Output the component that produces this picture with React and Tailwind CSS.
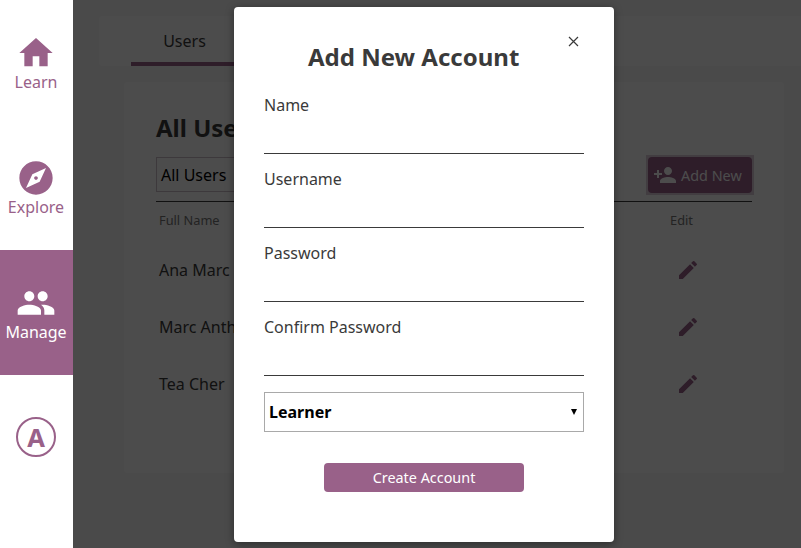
import React from "react";
import { MdHome, MdExplore, MdPeople, MdPersonAdd, MdEdit } from "react-icons/md";

const users = ["Ana Marc", "Marc Anthony", "Tea Cher"];
const fields = ["Name", "Username", "Password", "Confirm Password"];

function NavItem({ icon: Icon, label, active }) {
  return (
    <a
      className={
        active
          ? "flex h-[125px] w-full flex-col items-center bg-[#996189] pt-[33px] pr-px text-white"
          : "flex h-[125px] w-full flex-col items-center pt-[33px] pr-px text-[#996189]"
      }
    >
      <Icon className="size-10 shrink-0" />
      <span className="-mt-[2px] text-base leading-[22px]">{label}</span>
    </a>
  );
}

function Sidebar() {
  return (
    <nav className="flex h-full w-[73px] shrink-0 flex-col bg-white">
      <NavItem icon={MdHome} label="Learn" />
      <NavItem icon={MdExplore} label="Explore" />
      <NavItem icon={MdPeople} label="Manage" active />
      <div className="mt-[42px] ml-4 flex size-10 items-center justify-center rounded-full border-2 border-[#996189] pt-0.5 text-[25.6px] leading-none font-bold text-[#996189]">
        A
      </div>
    </nav>
  );
}

function Page() {
  return (
    <main className="h-full flex-1 overflow-hidden bg-[#f8f8f8] pt-4 pl-[26px]">
      <div className="flex h-[50px] rounded-l bg-white pl-8">
        <div className="h-full w-[107px] border-b-4 border-[#996189] text-center leading-[50px]">
          Users
        </div>
      </div>
      <section className="mt-4 ml-[25px] h-[391px] w-[660px] rounded bg-white px-8 pt-[29px]">
        <h1 className="text-2xl leading-[33px] font-bold">All Users</h1>
        <div className="mt-[11px] flex items-start justify-between">
          <div className="mt-0.5 h-[35px] w-[160px] border border-[#cdc0ca] pl-1 leading-[34px] text-black">
            All Users
          </div>
          <div className="-mr-0.5 bg-[#dccddb] p-0.5">
            <button className="flex h-9 w-[104px] items-center rounded bg-[#996189] pl-[5px] text-[14.4px] text-white">
              <MdPersonAdd className="size-6 shrink-0" />
              <span className="ml-1 pt-0.5 whitespace-nowrap">Add New</span>
            </button>
          </div>
        </div>
        <div className="mt-1.5 flex h-[38px] items-center justify-between border-t border-[#3a3a3a] pr-[59px] pl-[3px] text-[12.8px] text-[#757575]">
          <span>Full Name</span>
          <span>Edit</span>
        </div>
        {users.map((name) => (
          <div key={name} className="flex h-[57px] items-center justify-between pt-[5px] pr-[52px] pl-[3px]">
            <span>{name}</span>
            <MdEdit className="size-6 text-[#996189]" />
          </div>
        ))}
      </section>
    </main>
  );
}

function AccountDialog() {
  return (
    <div className="flex h-[535px] w-[380px] flex-col rounded bg-white px-[30px] pt-[23px] shadow-[0_2px_8px_rgba(0,0,0,0.4)]">
      <header className="flex h-[63px] items-start pl-11">
        <h2 className="mt-[10px] text-2xl leading-[33px] font-bold whitespace-nowrap">Add New Account</h2>
        <button aria-label="Close" className="mr-[5px] ml-auto flex h-[23px] items-center">
          <svg viewBox="0 0 11 11" className="size-[11px]" stroke="#3a3a3a" strokeWidth="1.2">
            <path d="M1 1L10 10M10 1L1 10" />
          </svg>
        </button>
      </header>
      {fields.map((label) => (
        <label key={label} className="block h-[74px]">
          <span className="block leading-[24px]">{label}</span>
          <input className="block h-[37px] w-full border-b border-[#3a3a3a] bg-transparent outline-none" />
        </label>
      ))}
      <div className="mt-[3px] flex h-10 items-center justify-between border border-[#a9a9a9] pr-1.5 pl-1 font-bold text-black">
        <span>Learner</span>
        <svg viewBox="0 0 6 6" className="size-1.5">
          <path d="M0 0H6L3 6Z" />
        </svg>
      </div>
      <button className="mx-auto mt-[31px] h-[29px] w-[200px] rounded bg-[#996189] text-[14.4px] text-white">
        Create Account
      </button>
    </div>
  );
}

export default function App() {
  return (
    <div className="relative flex h-[548px] w-[801px] overflow-hidden bg-white font-['Noto_Sans',sans-serif] text-base text-[#3a3a3a]">
      <Sidebar />
      <Page />
      <div className="absolute inset-y-0 right-0 left-[73px] bg-black/70 pt-[7px] pl-[161px]">
        <AccountDialog />
      </div>
    </div>
  );
}
